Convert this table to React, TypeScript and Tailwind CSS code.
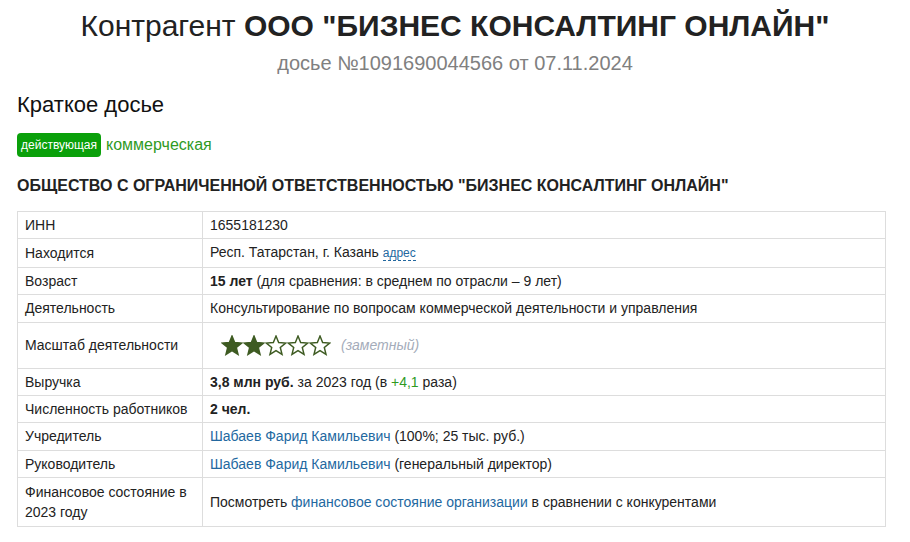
import React from "react";

const Star = ({ filled }: { filled: boolean }) => (
  <svg width="22" height="21" viewBox="0 0 24 23" className="block">
    <path
      d="M12 1.2 L14.9 8.3 L22.6 8.8 L16.7 13.7 L18.6 21.2 L12 17.1 L5.4 21.2 L7.3 13.7 L1.4 8.8 L9.1 8.3 Z"
      fill={filled ? "#3e5b22" : "#ffffff"}
      stroke="#3e5b22"
      strokeWidth="1.6"
      strokeLinejoin="miter"
    />
  </svg>
);

const Row = ({ label, children }: { label: React.ReactNode; children: React.ReactNode }) => (
  <tr>
    <td className="border border-[#dddddd] px-[7px] py-1 align-middle w-[185px]">{label}</td>
    <td className="border border-[#dddddd] px-[7px] py-1 align-middle">{children}</td>
  </tr>
);

const A = ({ children }: { children: React.ReactNode }) => (
  <span className="text-[#23689f]">{children}</span>
);

export default function App() {
  return (
    <div className="min-h-[542px] bg-white text-[#333333] font-['Liberation_Sans',Arial,sans-serif] px-[17px]">
      <h1 className="text-center text-[30px] leading-none pt-[11px] text-[#222222]">
        Контрагент <b className="font-bold">ООО "БИЗНЕС КОНСАЛТИНГ ОНЛАЙН"</b>
      </h1>
      <div className="text-center text-[20px] leading-none mt-[12px] text-[#808080]">
        досье №1091690044566 от 07.11.2024
      </div>
      <h2 className="text-[22px] leading-none mt-[21px] text-[#111111]">Краткое досье</h2>
      <div className="flex items-center gap-[5px] mt-[17px]">
        <span className="inline-flex items-center h-[24px] px-[4px] rounded-[4px] bg-[#0aa00a] text-white text-[12px] leading-none">
          действующая
        </span>
        <span className="text-[16px] leading-none text-[#2f9a1f]">коммерческая</span>
      </div>
      <div className="font-bold text-[16px] leading-none mt-[21px] text-[#222222]">
        ОБЩЕСТВО С ОГРАНИЧЕННОЙ ОТВЕТСТВЕННОСТЬЮ "БИЗНЕС КОНСАЛТИНГ ОНЛАЙН"
      </div>
      <table className="w-[869px] border-collapse mt-[17px] text-[14px] leading-[18.4px] text-[#222222]">
        <tbody>
          <Row label="ИНН">1655181230</Row>
          <Row label="Находится">
            Респ. Татарстан, г. Казань{" "}
            <span className="text-[12px] text-[#23689f] border-b border-dashed border-[#23689f]">адрес</span>
          </Row>
          <Row label="Возраст">
            <b>15 лет</b> (для сравнения: в среднем по отрасли – 9 лет)
          </Row>
          <Row label="Деятельность">Консультирование по вопросам коммерческой деятельности и управления</Row>
          <Row label="Масштаб деятельности">
            <div className="flex items-center h-[37px] pl-[11px]">
              <Star filled />
              <Star filled />
              <Star filled={false} />
              <Star filled={false} />
              <Star filled={false} />
              <span className="italic text-[#a4acba] ml-[10px]">(заметный)</span>
            </div>
          </Row>
          <Row label="Выручка">
            <b>3,8 млн руб.</b> за 2023 год (в <span className="text-[#2f9a1f]">+4,1</span> раза)
          </Row>
          <Row label="Численность работников">
            <b>2 чел.</b>
          </Row>
          <Row label="Учредитель">
            <A>Шабаев Фарид Камильевич</A> (100%; 25 тыс. руб.)
          </Row>
          <Row label="Руководитель">
            <A>Шабаев Фарид Камильевич</A> (генеральный директор)
          </Row>
          <tr>
            <td className="border border-[#dddddd] px-[7px] py-1 leading-[20px] align-middle">
              Финансовое состояние в 2023 году
            </td>
            <td className="border border-[#dddddd] px-[7px] py-1 align-middle">
              Посмотреть <A>финансовое состояние организации</A> в сравнении с конкурентами
            </td>
          </tr>
        </tbody>
      </table>
    </div>
  );
}
